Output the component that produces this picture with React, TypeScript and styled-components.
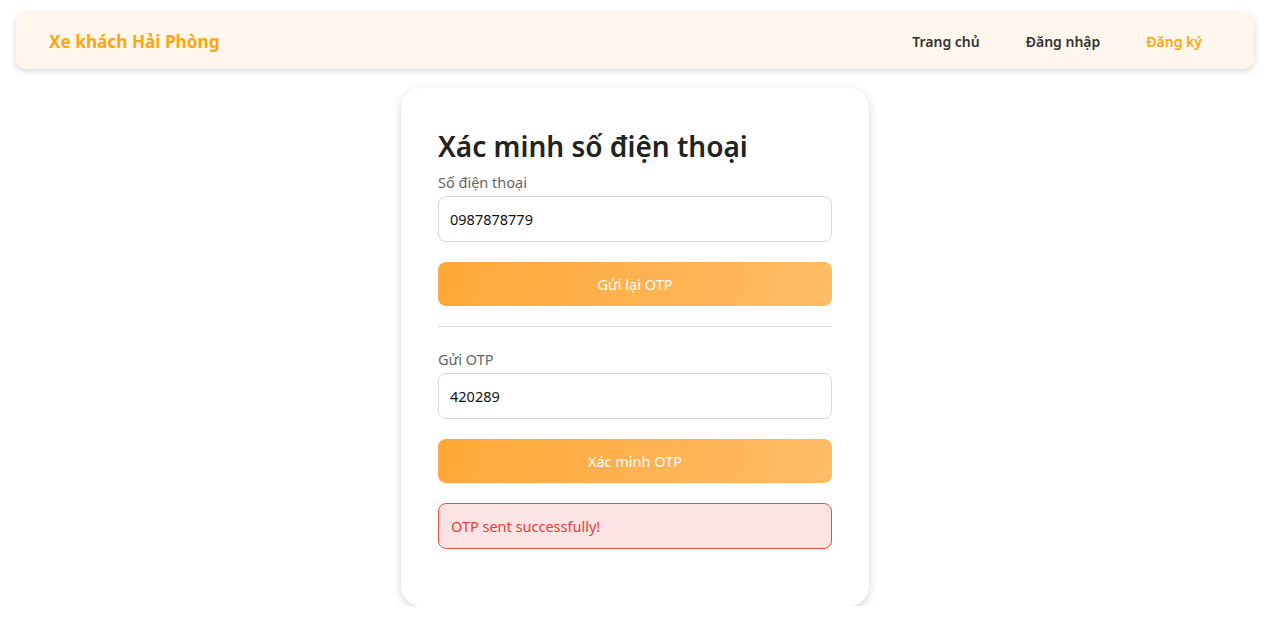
import styled, { createGlobalStyle } from "styled-components";

const GlobalStyle = createGlobalStyle`
  * { box-sizing: border-box; }
  body {
    margin: 0;
    background: #fff;
    font-family: "Noto Sans", "Open Sans", sans-serif;
    color: #222;
  }
`;

const Page = styled.div`
  padding: 13px 22px 0 16px;
  display: flex;
  flex-direction: column;
  align-items: stretch;
`;

const Navbar = styled.nav`
  height: 56px;
  background: #fff7ee;
  border-radius: 10px;
  box-shadow: 0 2px 7px rgba(0, 0, 0, 0.16);
  display: flex;
  align-items: center;
  justify-content: space-between;
  padding: 0 52px 0 33px;
`;

const Logo = styled.div`
  color: #ffa514;
  font-size: 17.2px;
  font-weight: 700;
`;

const NavLinks = styled.div`
  display: flex;
  gap: 46px;
`;

const NavLink = styled.a<{ $active?: boolean }>`
  font-size: 14px;
  font-weight: 600;
  color: ${(p) => (p.$active ? "#ffa514" : "#333")};
  text-decoration: none;
  cursor: pointer;
`;

const Card = styled.div`
  align-self: center;
  width: 468px;
  margin-top: 19px;
  background: #fff;
  border-radius: 20px;
  box-shadow: 0 3px 10px rgba(0, 0, 0, 0.16);
  padding: 38px 37px 57px;
  display: flex;
  flex-direction: column;
`;

const Title = styled.h2`
  margin: 0 0 6px;
  font-size: 28px;
  line-height: 40px;
  font-weight: 600;
  color: #222;
`;

const Label = styled.label`
  font-size: 14.5px;
  line-height: 20px;
  color: #666;
  margin-bottom: 4px;
`;

const Input = styled.input`
  height: 46px;
  border: 1px solid #d9d9d9;
  border-radius: 8px;
  padding: 0 11px;
  font-family: inherit;
  font-size: 14.5px;
  color: #111;
  outline: none;
  margin-bottom: 20px;
`;

const Button = styled.button`
  height: 44px;
  border: none;
  border-radius: 8px;
  background: linear-gradient(100deg, #ffa838 0%, #ffbb66 100%);
  color: #fff;
  font-family: inherit;
  font-size: 14.5px;
  cursor: pointer;
`;

const Divider = styled.hr`
  border: none;
  border-top: 1px solid #ddd;
  margin: 20px 0 22px;
`;

const Alert = styled.div`
  margin-top: 20px;
  height: 46px;
  display: flex;
  align-items: center;
  padding: 0 12px;
  background: #fde4e4;
  border: 1px solid #f24848;
  border-radius: 8px;
  color: #ec3b3b;
  font-size: 14.5px;
`;

export default function App() {
  return (
    <>
      <GlobalStyle />
      <Page>
        <Navbar>
          <Logo>Xe khách Hải Phòng</Logo>
          <NavLinks>
            <NavLink>Trang chủ</NavLink>
            <NavLink>Đăng nhập</NavLink>
            <NavLink $active>Đăng ký</NavLink>
          </NavLinks>
        </Navbar>
        <Card>
          <Title>Xác minh số điện thoại</Title>
          <Label>Số điện thoại</Label>
          <Input defaultValue="0987878779" />
          <Button>Gửi lại OTP</Button>
          <Divider />
          <Label>Gửi OTP</Label>
          <Input defaultValue="420289" />
          <Button>Xác minh OTP</Button>
          <Alert>OTP sent successfully!</Alert>
        </Card>
      </Page>
    </>
  );
}
